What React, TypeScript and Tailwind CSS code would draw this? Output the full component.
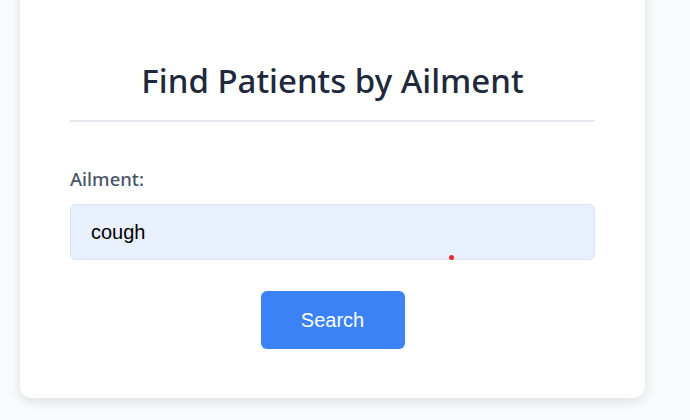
import React, { useState } from "react";

const App: React.FC = () => {
  const [ailment, setAilment] = useState("cough");

  return (
    <div className="min-h-screen w-full bg-[#f8fafc] overflow-hidden">
      <div className="ml-5 w-[625px] -mt-5 rounded-xl bg-white px-[50px] pt-[80px] pb-[49px] shadow-[0_4px_12px_rgba(0,0,0,0.1)]">
        <h2 className="text-center text-[33px] font-medium leading-[41px] text-[#1e293b] font-['Noto_Sans',sans-serif]">
          Find Patients by Ailment
        </h2>
        <div className="mt-[19px] h-[2px] w-full bg-[#e2e8f0]" />

        <form className="mt-[45px]" onSubmit={(e) => e.preventDefault()}>
          <label className="block text-[18.5px] font-medium leading-6 text-[#4a5568] font-['Noto_Sans',sans-serif]">
            Ailment:
          </label>
          <div className="relative mt-[13px]">
            <input
              value={ailment}
              onChange={(e) => setAilment(e.target.value)}
              className="block h-[56px] w-full rounded-md border border-[#dbe3ef] bg-[#e8f0fe] px-5 text-[20px] text-black outline-none font-['Liberation_Sans',Arial,sans-serif]"
            />
            <span className="absolute left-[379px] top-[51px] h-[5px] w-[5px] rounded-full bg-[#e52b2b]" />
          </div>
          <div className="mt-[31px] flex justify-center">
            <button
              type="submit"
              className="h-[58px] w-[144px] rounded-md bg-[#3b82f6] text-[20px] text-white font-['Liberation_Sans',Arial,sans-serif]"
            >
              Search
            </button>
          </div>
        </form>
      </div>
    </div>
  );
};

export default App;
